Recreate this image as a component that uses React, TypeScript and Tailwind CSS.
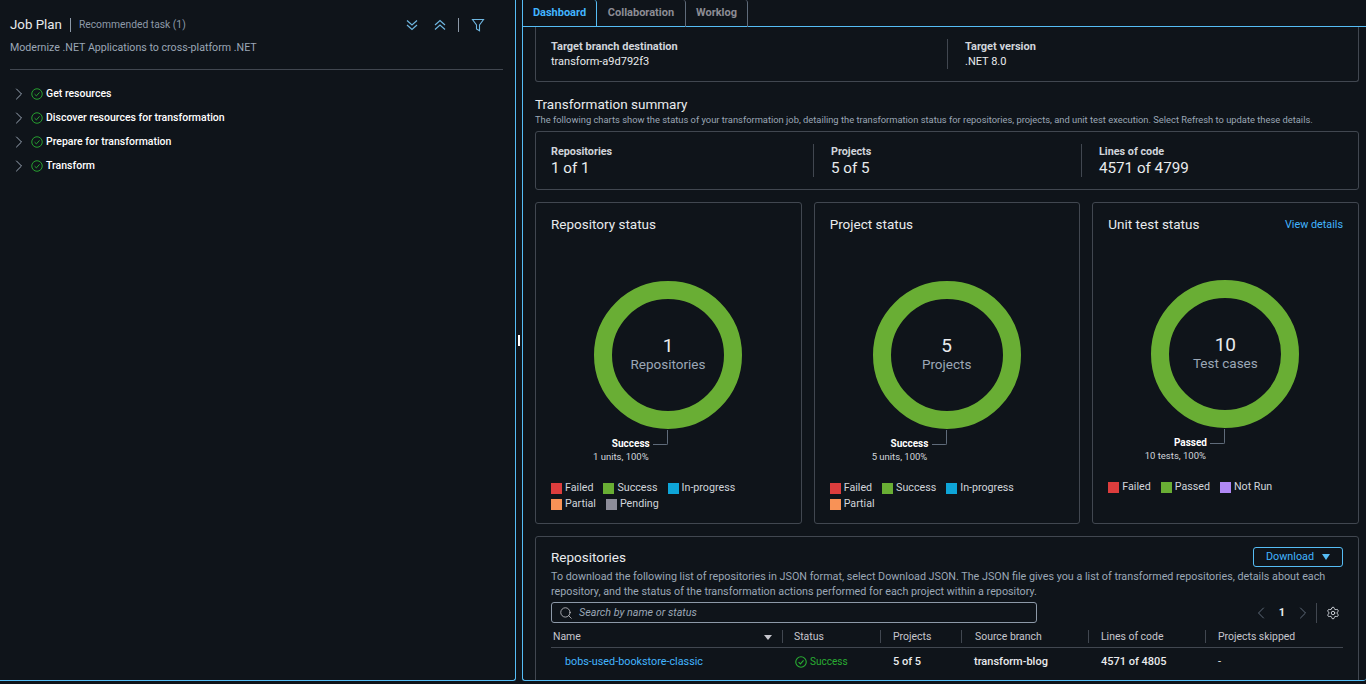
import React from "react";
import { ChevronRight, ChevronLeft, Search, Settings } from "lucide-react";

const Check = ({ size = 12, sw = 1.2 }: { size?: number; sw?: number }) => (
  <svg width={size} height={size} viewBox="0 0 16 16" fill="none" stroke="currentColor" strokeWidth={sw} className="text-[#29ad32]">
    <circle cx="8" cy="8" r="7" />
    <path d="M4.8 8.2 7.2 10.5 11.4 5.8" />
  </svg>
);

const Step = ({ label }: { label: string }) => (
  <div className="flex h-6 items-center">
    <ChevronRight size={20} strokeWidth={1.2} className="ml-[9px] text-[#9ba7b6]" />
    <span className="ml-[2px] flex"><Check /></span>
    <span className="ml-[3px] text-[10.5px] font-medium text-white">{label}</span>
  </div>
);

const Stat = ({ label, value, w }: { label: string; value: string; w: string }) => (
  <div className={`${w} flex h-[33px] flex-col justify-center`}>
    <div className="text-[10.8px] leading-[15px] font-bold text-[#d1d5db]">{label}</div>
    <div className="text-[15.2px] leading-[19px] text-[#e9ebed]">{value}</div>
  </div>
);

const Legend = ({ items }: { items: [string, string][] }) => (
  <div className="flex flex-wrap gap-x-[10px] gap-y-[5px]">
    {items.map(([n, c]) => (
      <div key={n} className="flex h-[11px] items-center gap-[3px] text-[10.7px] text-[#d1d5db]">
        <span className={`h-[11px] w-[11px] ${c}`} />
        {n}
      </div>
    ))}
  </div>
);

const Donut = ({ n, label }: { n: string; label: string }) => (
  <div className="relative h-[150px] w-[150px]">
    <svg width="150" height="150" viewBox="0 0 150 150">
      <circle cx="75" cy="75" r="65" fill="none" stroke="#69ae34" strokeWidth="18" />
    </svg>
    <div className="absolute inset-0 flex flex-col items-center justify-center pb-[2px]">
      <div className="text-[19px] leading-[19px] text-[#e9ebed]">{n}</div>
      <div className="text-[13.5px] leading-[18px] text-[#9ba7b6]">{label}</div>
    </div>
  </div>
);

const ChartCard = ({
  title, n, label, caption, sub, legend, link, last,
}: {
  title: string; n: string; label: string; caption: string; sub: string; legend: [string, string][]; link?: boolean; last?: boolean;
}) => (
  <div className="flex h-[322px] flex-col rounded-[3px] border border-[#414750] px-[15px]">
    <div className="mt-[11px] flex h-[20px] items-center justify-between">
      <span className="text-[13.5px] text-[#e9ebed]">{title}</span>
      {link && <span className="mt-[3px] text-[10.8px] text-[#42b4ff]">View details</span>}
    </div>
    <div className={`ml-[42px] ${last ? "mt-[45px]" : "mt-[46px]"}`}><Donut n={n} label={label} /></div>
    <div className="relative h-[32px]">
      <div className="absolute top-0 left-[102px] h-[15px] w-[15px] rounded-br-[2px] border-r border-b border-[#5f6b7a]" />
      <div className="absolute top-[7px] right-[136px] w-[90px] text-right text-[10px] leading-[14px] font-bold text-white">{caption}</div>
      <div className="absolute top-[21px] right-[137px] w-[100px] text-right text-[9.5px] leading-[12px] text-[#d1d5db]">{sub}</div>
    </div>
    <div className="mt-[21px]"><Legend items={legend} /></div>
  </div>
);

const Th = ({ label, w, sort }: { label: string; w: string; sort?: boolean }) => (
  <div className={`${w} relative flex h-[22px] items-center pt-[2px] text-[10.45px] text-[#c6c6cd]`}>
    {label}
    {sort && <span className="absolute top-[10px] right-[11px] h-0 w-0 border-x-[4px] border-t-[5px] border-x-transparent border-t-[#c6c6cd]" />}
    <span className="absolute top-[5px] right-0 h-[13px] w-px bg-[#414750]" />
  </div>
);

export default function App() {
  return (
    <div
      className="flex h-[684px] w-[1366px] overflow-hidden bg-[#0f141a] text-[#d1d5db]"
      style={{ fontFamily: "Roboto, sans-serif" }}
    >
      <aside className="h-[681px] w-[516px] shrink-0 rounded-br-[3px] border-r border-b border-[#56bdf5]">
        <div className="px-[10px] pt-[15px]">
          <div className="flex h-[20px] items-center">
            <span className="text-[13.3px] text-[#e9ebed]">Job Plan</span>
            <span className="mx-[8px] h-[14px] w-px bg-[#8d99a8]" />
            <span className="text-[10.3px] text-[#8d99a8]">Recommended task (1)</span>
            <div className="ml-auto flex items-center pr-[20px] text-[#6fb6e0]">
              <svg width="14" height="14" viewBox="0 0 14 14" fill="none" stroke="currentColor" strokeWidth="1.2">
                <path d="M2 2.5 7 7 12 2.5M2 7 7 11.5 12 7" />
              </svg>
              <svg width="14" height="14" viewBox="0 0 14 14" fill="none" stroke="currentColor" strokeWidth="1.2" className="ml-[14px]">
                <path d="M2 7 7 2.5 12 7M2 11.5 7 7 12 11.5" />
              </svg>
              <span className="mr-[12px] ml-[11px] h-[14px] w-px bg-[#8d99a8]" />
              <svg width="14" height="14" viewBox="0 0 14 14" fill="none" stroke="currentColor" strokeWidth="1.1">
                <path d="M1.5 1.5H12.5L8.5 7V12.8L5.5 11V7Z" />
              </svg>
            </div>
          </div>
          <div className="mt-[2px] pt-[1px] text-[10.65px] leading-[20px] text-[#9ba7b6]">Modernize .NET Applications to cross-platform .NET</div>
          <div className="mt-[11px] mr-[2px] h-px bg-[#414750]" />
        </div>
        <div className="mt-[12px]">
          <Step label="Get resources" />
          <Step label="Discover resources for transformation" />
          <Step label="Prepare for transformation" />
          <Step label="Transform" />
        </div>
      </aside>

      <div className="flex w-[6px] shrink-0 items-start justify-center">
        <span className="mt-[335px] h-[11px] w-[2px] bg-white" />
      </div>

      <main className="flex h-[681px] flex-1 flex-col overflow-hidden rounded-b-[3px] border-b border-l border-[#56bdf5]">
        <div className="flex h-[27px] shrink-0 items-end border-b border-[#56bdf5] text-[11px] font-bold">
          <div className="flex h-[26px] w-[74px] items-center justify-center rounded-tr-[3px] border-r border-[#56bdf5] text-[#42b4ff]">Dashboard</div>
          <div className="-mb-px flex h-[27px] w-[89px] items-center justify-center rounded-t-[3px] border-r border-[#5f6b7a] text-[#8c8c94]">Collaboration</div>
          <div className="-mb-px flex h-[27px] w-[62px] items-center justify-center rounded-t-[3px] border-r border-[#5f6b7a] text-[#8c8c94]">Worklog</div>
        </div>

        <div className="pr-[7px] pl-[12px]">
          <div className="flex h-[55px] items-start rounded-b-[3px] border-x border-b border-[#414750] pt-[12px] pl-[15px]">
            <div className="h-[30px] w-[397px] border-r border-[#414750] text-[11px] leading-[15px]">
              <div className="font-bold text-[#d1d5db]">Target branch destination</div>
              <div className="text-[#e9ebed]">transform-a9d792f3</div>
            </div>
            <div className="pl-[17px] text-[11px] leading-[15px]">
              <div className="font-bold text-[#d1d5db]">Target version</div>
              <div className="text-[#e9ebed]">.NET 8.0</div>
            </div>
          </div>

          <div className="mt-[13px] text-[13.5px] leading-[19px] text-[#e9ebed]">Transformation summary</div>
          <div className="whitespace-nowrap text-[9.35px] leading-[11px] text-[#9ba7b6]">
            The following charts show the status of your transformation job, detailing the transformation status for repositories, projects, and unit test execution. Select Refresh to update these details.
          </div>

          <div className="mt-[6px] flex h-[59px] items-center rounded-[3px] border border-[#414750] pl-[15px]">
            <Stat label="Repositories" value="1 of 1" w="w-[263px] border-r border-[#414750] mr-[17px]" />
            <Stat label="Projects" value="5 of 5" w="w-[251px] border-r border-[#414750] mr-[17px]" />
            <Stat label="Lines of code" value="4571 of 4799" w="w-[200px]" />
          </div>

          <div className="mt-[12px] grid grid-cols-3 gap-[12px]">
            <ChartCard
              title="Repository status" n="1" label="Repositories" caption="Success" sub="1 units, 100%"
              legend={[["Failed", "bg-[#dc3d3d]"], ["Success", "bg-[#69ae34]"], ["In-progress", "bg-[#0ea5d8]"], ["Partial", "bg-[#f89256]"], ["Pending", "bg-[#8d8d99]"]]}
            />
            <ChartCard
              title="Project status" n="5" label="Projects" caption="Success" sub="5 units, 100%"
              legend={[["Failed", "bg-[#dc3d3d]"], ["Success", "bg-[#69ae34]"], ["In-progress", "bg-[#0ea5d8]"], ["Partial", "bg-[#f89256]"]]}
            />
            <ChartCard
              last link title="Unit test status" n="10" label="Test cases" caption="Passed" sub="10 tests, 100%"
              legend={[["Failed", "bg-[#dc3d3d]"], ["Passed", "bg-[#69ae34]"], ["Not Run", "bg-[#b088f5]"]]}
            />
          </div>

          <div className="mt-[12px] h-[200px] rounded-[3px] border border-[#414750] px-[15px] pt-[10px]">
            <div className="flex h-[20px] items-center justify-between">
              <span className="text-[13.5px] text-[#e9ebed]">Repositories</span>
              <div className="flex h-[20px] w-[90px] items-center justify-center gap-[8px] rounded-[3px] border border-[#56bdf5] text-[10.8px] text-[#42b4ff]">
                Download
                <span className="h-0 w-0 border-x-[4px] border-t-[6px] border-x-transparent border-t-[#56bdf5]" />
              </div>
            </div>
            <div className="mt-[2px] text-[10.75px] leading-[15px] text-[#9ba7b6]">
              To download the following list of repositories in JSON format, select Download JSON. The JSON file gives you a list of transformed repositories, details about each repository, and the status of the transformation actions performed for each project within a repository.
            </div>
            <div className="mt-[3px] flex h-[21px] items-center">
              <div className="flex h-[21px] w-[486px] items-center rounded-[3px] border border-[#8d99a8] pt-[1px] pl-[7px] text-[10.75px] text-[#9ba7b6] italic">
                <Search size={14} strokeWidth={1.4} className="mr-[6px] text-[#c6c6cd]" />
                Search by name or status
              </div>
              <div className="ml-auto flex items-center pt-[1px] text-[#5f6b7a]">
                <ChevronLeft size={20} strokeWidth={1.2} />
                <span className="w-[22px] text-center text-[11px] font-bold text-[#e9ebed]">1</span>
                <ChevronRight size={20} strokeWidth={1.2} />
                <span className="mr-[9px] ml-[3px] h-[20px] w-px bg-[#414750]" />
                <Settings size={14} strokeWidth={1.6} className="mr-[3px] text-[#d1d5db]" />
              </div>
            </div>
            <div className="mt-[2px] flex border-b border-[#414750]">
              <Th label="Name" w="w-[232px] pl-[2px]" sort />
              <Th label="Status" w="w-[98px] pl-[11px]" />
              <Th label="Projects" w="w-[81px] pl-[12px]" />
              <Th label="Source branch" w="w-[127px] pl-[13px]" />
              <Th label="Lines of code" w="w-[117px] pl-[12px]" />
              <div className="flex h-[22px] items-center pt-[2px] pl-[12px] text-[10.45px] text-[#c6c6cd]">Projects skipped</div>
            </div>
            <div className="flex h-[27px] items-center pt-[2px] text-[11px] text-[#e9ebed]">
              <div className="w-[232px] pl-[14px] text-[10.8px] text-[#42b4ff]">bobs-used-bookstore-classic</div>
              <div className="mb-[2px] flex w-[98px] items-center gap-[3px] pl-[12px] text-[10px] text-[#29ad32]"><Check size={12} sw={1.5} /> Success</div>
              <div className="w-[81px] pl-[12px] font-medium">5 of 5</div>
              <div className="w-[127px] pl-[12px] font-medium">transform-blog</div>
              <div className="w-[117px] pl-[12px] font-medium">4571 of 4805</div>
              <div className="pl-[12px]">-</div>
            </div>
          </div>
        </div>
      </main>
    </div>
  );
}
